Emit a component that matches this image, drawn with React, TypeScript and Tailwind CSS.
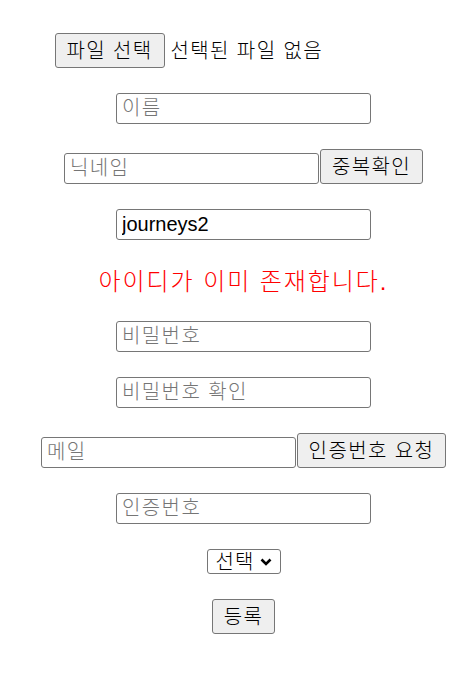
import React from "react";

const inputCls =
  "h-[31px] w-[255px] rounded-[3px] border border-[#767676] bg-white px-[5px] text-[20px] text-black outline-none placeholder:tracking-[0.07em] placeholder:text-[#757575]";
const buttonCls =
  "h-[35px] rounded-[3px] border border-[#767676] bg-[#efefef] text-[20px] leading-none tracking-[0.07em] text-black";

export default function App() {
  return (
    <div className="min-h-[692px] bg-white pl-[15px] pt-[33px] font-['Liberation_Sans','Noto_Sans_CJK_KR',sans-serif] font-light text-black">
      <form className="flex flex-col items-center gap-[25px]">
        <div className="flex h-[35px] w-[378px] items-center gap-[6px]">
          <button type="button" className={`${buttonCls} w-[110px]`}>
            파일 선택
          </button>
          <span className="text-[20px] tracking-[0.07em]">선택된 파일 없음</span>
        </div>

        <input className={inputCls} placeholder="이름" />

        <div className="flex items-end">
          <input className={inputCls} placeholder="닉네임" />
          <button type="button" className={`${buttonCls} ml-px w-[103px]`}>
            중복확인
          </button>
        </div>

        <input className={`${inputCls} font-normal`} defaultValue="journeys2" />

        <p className="h-[31px] text-[24px] leading-[33px] tracking-[0.08em] text-[#ff0000]">
          아이디가 이미 존재합니다.
        </p>

        <input className={inputCls} type="password" placeholder="비밀번호" />
        <input className={inputCls} type="password" placeholder="비밀번호 확인" />

        <div className="flex items-end">
          <input className={inputCls} placeholder="메일" />
          <button type="button" className={`${buttonCls} ml-px w-[149px]`}>
            인증번호 요청
          </button>
        </div>

        <input className={inputCls} placeholder="인증번호" />

        <div className="flex h-[25px] w-[74px] items-center rounded-[3px] border border-[#767676] bg-white pl-[8px] pr-[8px]">
          <select className="flex-1 appearance-none bg-transparent text-[20px] leading-none tracking-[0.05em] outline-none">
            <option>선택</option>
          </select>
          <svg width="12" height="8" viewBox="0 0 12 8" className="shrink-0">
            <path d="M1.5 1.5 6 6l4.5-4.5" fill="none" stroke="#000" strokeWidth="2.6" />
          </svg>
        </div>

        <button type="submit" className={`${buttonCls} w-[63px]`}>
          등록
        </button>
      </form>
    </div>
  );
}
